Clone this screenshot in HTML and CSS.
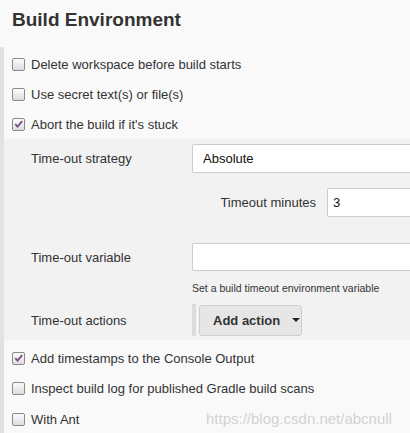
FILE: index.html
```html
<!DOCTYPE html>
<html>
<head>
<meta charset="utf-8">
<link rel="stylesheet" href="styles.css">
</head>
<body>
<h2 class="title">Build Environment</h2>
<div class="section">
  <div class="check-row"><span class="cb"></span><span>Delete workspace before build starts</span></div>
  <div class="check-row"><span class="cb"></span><span>Use secret text(s) or file(s)</span></div>
  <div class="check-row"><span class="cb checked"><svg viewBox="0 0 12 12" width="12" height="12"><path d="M2.5 6.2 L5 8.8 L10 2.8" fill="none" stroke="#7b4f8f" stroke-width="2"/></svg></span><span>Abort the build if it's stuck</span></div>
  <div class="nested">
    <div class="field">
      <div class="label">Time-out strategy</div>
      <div class="value"><div class="select">Absolute</div></div>
    </div>
    <div class="field sub">
      <div class="value sub-value"><span class="sub-label">Timeout minutes</span><div class="input small">3</div></div>
    </div>
    <div class="field var">
      <div class="label">Time-out variable</div>
      <div class="value"><div class="input"></div></div>
    </div>
    <div class="help">Set a build timeout environment variable</div>
    <div class="field actions">
      <div class="label">Time-out actions</div>
      <div class="value"><div class="btn-wrap"><span class="btn">Add action <span class="caret"></span></span></div></div>
    </div>
  </div>
  <div class="after">
    <div class="check-row"><span class="cb checked"><svg viewBox="0 0 12 12" width="12" height="12"><path d="M2.5 6.2 L5 8.8 L10 2.8" fill="none" stroke="#7b4f8f" stroke-width="2"/></svg></span><span>Add timestamps to the Console Output</span></div>
    <div class="check-row"><span class="cb"></span><span>Inspect build log for published Gradle build scans</span></div>
    <div class="check-row"><span class="cb"></span><span>With Ant</span><span class="watermark">https://blog.csdn.net/abcnull</span></div>
  </div>
</div>
</body>
</html>
```
FILE: styles.css
```css
html, body { overflow: hidden; }
body {
  margin: 0;
  background: #f9f9f9;
  font-family: "Liberation Sans", Arial, sans-serif;
  font-size: 13px;
  color: #333;
  width: 410px;
}
.title {
  margin: 0 0 15px 0;
  padding: 8px 0 0 12px;
  font-size: 19px;
  line-height: 24px;
  font-weight: bold;
  color: #333;
}
.section {
  border-left: 4px solid #e2e2e2;
  padding-top: 2px;
  width: 406px;
  overflow: hidden;
}
.check-row {
  position: relative;
  height: 30px;
  display: flex;
  align-items: center;
  padding-left: 8px;
}
.after { padding-top: 3px; }
.after .check-row { height: 30.5px; }
.cb {
  width: 11px;
  height: 11px;
  border: 1px solid #8a8a8a;
  border-radius: 2px;
  background: linear-gradient(#fcfcfc, #dcdcdc);
  margin-right: 6px;
  display: flex;
  align-items: center;
  justify-content: center;
  flex: none;
}
.cb svg { display: block; margin-top: -1px; }
.watermark {
  position: absolute;
  left: 202px;
  top: 6px;
  font-size: 15px;
  color: rgba(200, 200, 200, 0.8);
  white-space: nowrap;
}
.nested {
  background: #f2f2f2;
  padding: 5px 0 4px 0;
  width: 450px;
}
.field {
  display: grid;
  grid-template-columns: 188px 260px;
  align-items: center;
}
.label { padding-left: 27px; }
.value { display: flex; align-items: center; }
.select, .input {
  box-sizing: border-box;
  width: 260px;
  background: #fff;
  border: 1px solid #ccc;
  border-radius: 2px;
  color: #111;
}
.select { height: 29px; line-height: 27px; padding-left: 10px; }
.field.sub { margin-top: 15px; }
.sub-value { grid-column: 2; }
.sub-label { width: 124px; flex: none; text-align: right; margin-right: 11px; }
.input.small { width: 140px; flex: none; height: 29px; line-height: 27px; padding-left: 5px; }
.field.var { margin-top: 26px; }
.field.var .input { height: 28px; }
.help {
  padding-left: 188px;
  font-size: 10.5px;
  color: #333;
  margin-top: 10px;
  line-height: 14px;
}
.field.actions { margin-top: 9px; }
.btn-wrap {
  border-left: 4px solid #dcdcdc;
  padding-left: 3px;
  height: 32px;
  display: flex;
  align-items: center;
}
.btn {
  box-sizing: border-box;
  width: 103px;
  height: 31px;
  background: #e6e6e6;
  border: 1px solid #cfcfcf;
  border-radius: 3px;
  font-weight: bold;
  color: #333;
  display: flex;
  align-items: center;
  padding-left: 13px;
}
.caret {
  width: 0; height: 0;
  border-left: 4px solid transparent;
  border-right: 4px solid transparent;
  border-top: 4px solid #222;
  margin-left: 12px;
}
```
